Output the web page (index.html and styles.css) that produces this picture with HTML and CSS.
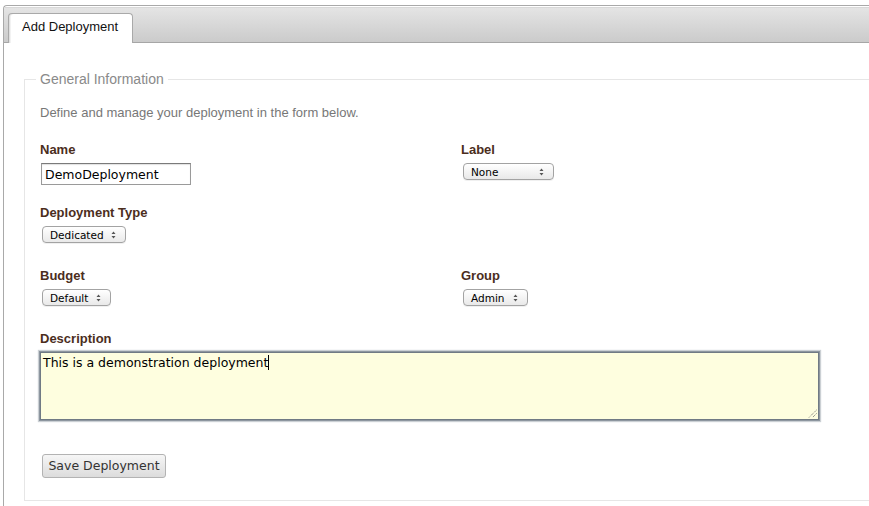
FILE: index.html
```html
<!DOCTYPE html>
<html>
<head>
<meta charset="utf-8">
<link rel="stylesheet" href="styles.css">
</head>
<body>
<div class="frame">
  <div class="tabbar">
    <div class="tab">Add Deployment</div>
  </div>
  <div class="content">
    <fieldset class="group">
      <legend class="legend">General Information</legend>
      <p class="intro">Define and manage your deployment in the form below.</p>
      <div class="grid">
        <div class="field">
          <div class="label">Name</div>
          <div class="input">DemoDeployment</div>
        </div>
        <div class="field">
          <div class="label">Label</div>
          <div class="select w-none"><span>None</span><svg class="arrows" width="5" height="8" viewBox="0 0 5 8"><path d="M2.5 0.5 L4.5 3 L0.5 3 Z M2.5 7.5 L4.5 5 L0.5 5 Z" fill="#555"/></svg></div>
        </div>
        <div class="field">
          <div class="label">Deployment Type</div>
          <div class="select w-dedicated"><span>Dedicated</span><svg class="arrows" width="5" height="8" viewBox="0 0 5 8"><path d="M2.5 0.5 L4.5 3 L0.5 3 Z M2.5 7.5 L4.5 5 L0.5 5 Z" fill="#555"/></svg></div>
        </div>
        <div class="field"></div>
        <div class="field">
          <div class="label">Budget</div>
          <div class="select w-default"><span>Default</span><svg class="arrows" width="5" height="8" viewBox="0 0 5 8"><path d="M2.5 0.5 L4.5 3 L0.5 3 Z M2.5 7.5 L4.5 5 L0.5 5 Z" fill="#555"/></svg></div>
        </div>
        <div class="field">
          <div class="label">Group</div>
          <div class="select w-admin"><span>Admin</span><svg class="arrows" width="5" height="8" viewBox="0 0 5 8"><path d="M2.5 0.5 L4.5 3 L0.5 3 Z M2.5 7.5 L4.5 5 L0.5 5 Z" fill="#555"/></svg></div>
        </div>
      </div>
      <div class="desc">
        <div class="label">Description</div>
        <div class="textarea">
          <span class="tatext">This is a demonstration deployment</span><span class="caret"></span>
          <svg class="grip" width="9" height="9" viewBox="0 0 9 9"><path d="M8.5 1 L1 8.5 M8.5 4.5 L4.5 8.5" stroke="#666" stroke-width="1" stroke-dasharray="1 1" fill="none"/></svg>
        </div>
      </div>
      <div class="actions">
        <div class="button">Save Deployment</div>
      </div>
    </fieldset>
  </div>
</div>
</body>
</html>
```

FILE: styles.css
```css
html, body {
  margin: 0;
  padding: 0;
  background: #ffffff;
  overflow: hidden;
  height: 506px;
}
body {
  font-family: "Liberation Sans", Arial, sans-serif;
}
.frame {
  margin: 5px 0 0 3px;
  border-top: 1px solid #a9a9a9;
  border-left: 1px solid #a9a9a9;
  border-top-left-radius: 4px;
  height: 520px;
  overflow: hidden;
}
.tabbar {
  margin-top: 1px;
  height: 34px;
  background: linear-gradient(#e4e4e4, #cbcbcb);
  border-top: 1px solid #d8d8d8;
  border-bottom: 1px solid #a6a6a6;
  display: flex;
  align-items: flex-end;
  padding-left: 4px;
}
.tab {
  width: 110px;
  height: 29px;
  margin-bottom: -1px;
  background: #ffffff;
  border: 1px solid #a9a9a9;
  border-bottom: none;
  border-radius: 4px 4px 0 0;
  box-shadow: inset 1px 0 0 #e0e0e0, inset 2px 0 0 #f2f2f2;
  padding-left: 13px;
  font-size: 13px;
  line-height: 26px;
  color: #111;
}
.content {
  padding: 28px 0 0 20px;
}
.group {
  margin: 0 -30px 0 0;
  border: 1px solid #e6e6e6;
  padding: 0 15px 22px 15px;
}
.legend {
  margin-left: -4px;
  padding: 0 4px;
  font-size: 14px;
  line-height: 16px;
  color: #8a8a8a;
}
.intro {
  margin: 17px 0 20px 0;
  font-size: 13px;
  line-height: 18px;
  color: #777;
}
.grid {
  display: grid;
  grid-template-columns: 421px 1fr;
  grid-auto-rows: 63px;
}
.label {
  font-size: 13px;
  font-weight: bold;
  line-height: 16px;
  color: #4b2e1d;
  margin-bottom: 5px;
}
.input {
  margin-left: 1px;
  width: 145px;
  height: 20px;
  border: 1px solid #9a9a9a;
  border-top-color: #7a7a7a;
  box-shadow: inset 0 1px 1px rgba(0,0,0,0.12);
  padding-left: 3px;
  font-family: "DejaVu Sans", sans-serif;
  font-size: 12.5px;
  line-height: 21px;
  color: #000;
}
.select {
  margin-left: 2px;
  height: 15px;
  border: 1px solid #a3a3a3;
  border-radius: 4px;
  background: linear-gradient(#ffffff, #e9e9e9);
  box-shadow: 0 1px 0 rgba(0,0,0,0.06);
  display: flex;
  align-items: center;
  justify-content: space-between;
  padding: 0 9px 0 7px;
  font-family: "DejaVu Sans", sans-serif;
  font-size: 10.5px;
  color: #000;
  box-sizing: content-box;
}
.w-none { width: 73px; }
.w-dedicated { width: 66px; }
.w-default { width: 51px; }
.w-admin { width: 47px; }
.label + .select { margin-top: 1px; }
.arrows { display: block; }
.desc .label {
  margin-bottom: 5px;
}
.textarea {
  position: relative;
  width: 773px;
  height: 64px;
  border: 1px solid #707a84;
  box-shadow: 0 0 0 1px #8d969f, 0 0 1px 2px rgba(140,150,160,0.45);
  background: #fefedf;
  padding: 1px 2px;
  font-family: "DejaVu Sans", sans-serif;
  font-size: 12.5px;
  line-height: 18px;
  color: #000;
}
.caret {
  display: inline-block;
  width: 1px;
  height: 15px;
  background: #000;
  vertical-align: -3px;
}
.grip {
  position: absolute;
  right: 1px;
  bottom: 1px;
}
.actions {
  margin-top: 34px;
  display: flex;
}
.button {
  margin-left: 2px;
  width: 122px;
  height: 22px;
  border: 1px solid #b3b3b3;
  border-radius: 3px;
  background: linear-gradient(#f6f6f6, #dcdcdc);
  font-family: "DejaVu Sans", sans-serif;
  font-size: 12.5px;
  line-height: 22px;
  text-align: center;
  color: #333;
}
```
